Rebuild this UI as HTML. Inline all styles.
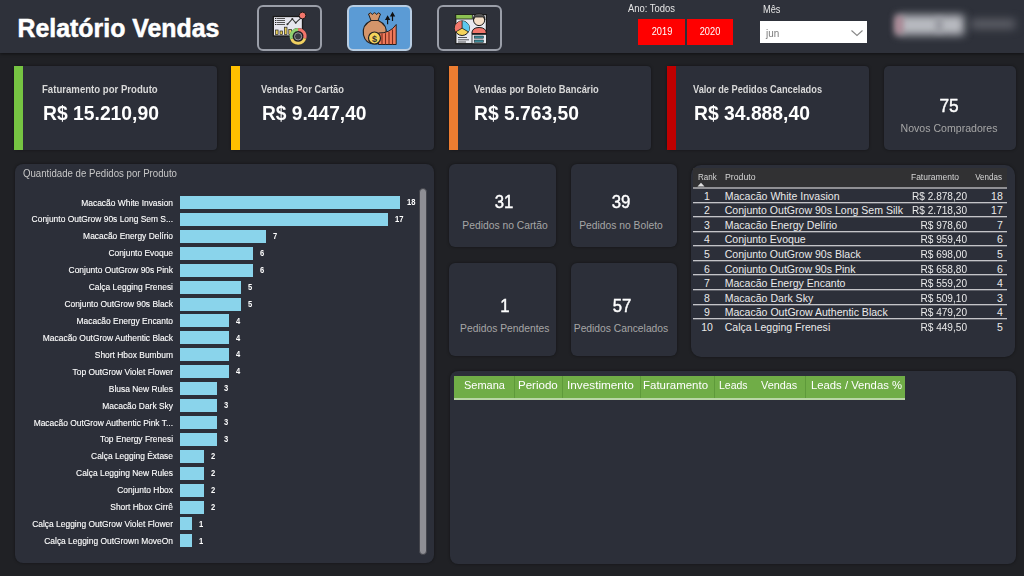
<!DOCTYPE html>
<html><head><meta charset="utf-8"><title>Relatório Vendas</title>
<style>
html,body{margin:0;padding:0;}
body{width:1024px;height:576px;overflow:hidden;position:relative;background:#202125;font-family:"Liberation Sans",sans-serif;}
.r{position:absolute;}
.t{position:absolute;white-space:nowrap;}
</style></head><body>
<div class="r" style="left:0px;top:0px;width:1024px;height:53px;background:#2e313a;box-shadow:0 1px 3px rgba(0,0,0,.5);"></div>
<div class="t" style="top:16.42px;font-size:24.9px;line-height:24.9px;color:#ffffff;font-weight:bold;left:17.5px;-webkit-text-stroke:0.5px #fff;">Relatório Vendas</div>
<div class="r" style="left:257px;top:5px;width:65px;height:46px;background:transparent;border:2px solid #9a9ea8;border-radius:6px;box-sizing:border-box;"></div>
<div class="r" style="left:347px;top:5px;width:65px;height:46px;background:#5b9bd5;border:2px solid #b8cde2;border-radius:6px;box-sizing:border-box;"></div>
<div class="r" style="left:437px;top:5px;width:65px;height:46px;background:transparent;border:2px solid #9a9ea8;border-radius:6px;box-sizing:border-box;"></div>
<svg style="position:absolute;left:257px;top:5px" width="65" height="46" viewBox="0 0 65 46">
<rect x="16.3" y="11.5" width="29.2" height="19.5" fill="#e6e6ee" stroke="#1a1a1a" stroke-width="1.3"/>
<g stroke="#555" stroke-width="1"><line x1="19.5" y1="13.5" x2="28" y2="13.5"/><line x1="19.5" y1="15.5" x2="28" y2="15.5"/><line x1="19.5" y1="17.5" x2="28" y2="17.5"/><line x1="19.5" y1="19.5" x2="28" y2="19.5"/></g>
<g fill="#222"><rect x="18" y="13" width="1" height="1"/><rect x="18" y="15" width="1" height="1"/><rect x="18" y="17" width="1" height="1"/><rect x="18" y="19" width="1" height="1"/></g>
<polyline points="30.4,19.3 35.3,14 38.7,17.8 43.5,13.5 45.5,10.5" fill="none" stroke="#333" stroke-width="1.1"/>
<g fill="#333"><circle cx="30.4" cy="19.3" r="1"/><circle cx="35.3" cy="14" r="1"/><circle cx="38.7" cy="17.8" r="1"/></g>
<circle cx="45.5" cy="10.5" r="3.4" fill="#f2766b" stroke="#1a1a1a" stroke-width="1"/>
<g fill="#e6cc5a" stroke="#222" stroke-width=".7"><rect x="18.5" y="25" width="2.6" height="4.5"/><rect x="23" y="26" width="2.6" height="3.5"/><rect x="27.4" y="22.2" width="2.6" height="7.3"/><rect x="31.8" y="24.5" width="2.6" height="5"/></g>
<circle cx="41.1" cy="31.4" r="8.3" fill="#1e1e24"/>
<path d="M41.1 24.4 A7 7 0 0 1 47.8 33.4" fill="none" stroke="#f2766b" stroke-width="3"/>
<path d="M47.8 33.4 A7 7 0 0 1 34.6 33.8" fill="none" stroke="#f0d060" stroke-width="3"/>
<path d="M34.6 33.8 A7 7 0 0 1 41.1 24.4" fill="none" stroke="#8fd070" stroke-width="3"/>
<circle cx="41.1" cy="31.4" r="3.6" fill="#3a3c44" stroke="#9a9aa0" stroke-width="1"/>
</svg>
<svg style="position:absolute;left:347px;top:5px" width="65" height="46" viewBox="0 0 65 46">
<path d="M21.5 9 Q23.5 6.5 25.5 9.5 Q27.5 6 29.5 9.5 Q31.5 6.5 33.5 9 L31 15.5 L24 15.5 Z" fill="#d4956a" stroke="#222" stroke-width="1"/>
<path d="M24.2 15.5 Q14.5 20 16.5 30 Q18.5 39 27.8 39 Q37 39 39 30 Q41 20 31.3 15.5 Z" fill="#d4956a" stroke="#222" stroke-width="1.2"/>
<path d="M31.5 39.5 L31.5 28 Q43 28.5 49.2 19.5 L49.2 39.5 Z" fill="#f07a5a" stroke="#222" stroke-width="1"/>
<g stroke="#7a2a1a" stroke-width="1.1"><line x1="35" y1="28.4" x2="35" y2="39.5"/><line x1="38.5" y1="28.2" x2="38.5" y2="39.5"/><line x1="42" y1="27" x2="42" y2="39.5"/><line x1="45.5" y1="24.5" x2="45.5" y2="39.5"/></g>
<circle cx="27.5" cy="33" r="6" fill="#f5d45a" stroke="#222" stroke-width="1.2"/>
<text x="27.5" y="36.5" font-size="9" font-family="Liberation Sans" font-weight="bold" text-anchor="middle" fill="#333">$</text>
<g stroke="#111" stroke-width="1.2" fill="#111"><line x1="40.6" y1="19.3" x2="40.6" y2="13.5"/><path d="M38.9 14.5 L40.6 11.5 L42.3 14.5Z"/><line x1="45.5" y1="16" x2="45.5" y2="10"/><path d="M43.8 11 L45.5 8 L47.2 11Z"/></g>
</svg>
<svg style="position:absolute;left:437px;top:5px" width="65" height="46" viewBox="0 0 65 46">
<rect x="18.8" y="9.6" width="30.6" height="29.1" fill="#e8eaf0" stroke="#1a1a1a" stroke-width="1.2"/>
<rect x="18.8" y="9.6" width="16.5" height="4.4" fill="#8cc152" stroke="#1a1a1a" stroke-width=".8"/>
<circle cx="25.1" cy="23.2" r="7.3" fill="#f5d45a" stroke="#1a1a1a" stroke-width="1"/>
<path d="M25.1 23.2 L25.1 15.9 A7.3 7.3 0 0 1 31.4 26.85 Z" fill="#5bc8f0"/>
<path d="M25.1 23.2 L18.8 26.85 A7.3 7.3 0 0 1 25.1 15.9 Z" fill="#f2766b"/>
<g stroke="#1a1a1a" stroke-width=".8"><line x1="25.1" y1="23.2" x2="25.1" y2="15.9"/><line x1="25.1" y1="23.2" x2="31.4" y2="26.85"/><line x1="25.1" y1="23.2" x2="18.8" y2="26.85"/></g>
<rect x="35" y="29.5" width="14.4" height="9.2" fill="#e8eaf0" stroke="#1a1a1a" stroke-width=".8"/>
<path d="M34.8 28.5 Q35 22.5 42.1 22.5 Q49.2 22.5 49.4 28.5 Z" fill="#f2766b" stroke="#1a1a1a" stroke-width="1"/>
<circle cx="42.1" cy="15" r="5.6" fill="#f5e0c8" stroke="#1a1a1a" stroke-width="1"/>
<path d="M36.3 15 Q36 8.5 42.1 8.5 Q48.2 8.5 47.9 15 L46.5 12 L38 12 Z" fill="#555" stroke="#1a1a1a" stroke-width=".8"/>
<rect x="37.2" y="31" width="9.3" height="2.2" fill="#3a8a9a" stroke="#1a1a1a" stroke-width=".5"/>
<rect x="37.2" y="35" width="9.3" height="2.3" fill="#3a8a9a" stroke="#1a1a1a" stroke-width=".5"/>
<g stroke="#444" stroke-width=".9"><line x1="21" y1="32.5" x2="30" y2="32.5"/><line x1="21" y1="34.8" x2="32" y2="34.8"/><line x1="21" y1="37" x2="29" y2="37"/></g>
</svg>
<div class="t" style="top:4.20px;font-size:10.4px;line-height:10.4px;color:#e6e6e6;left:628px;transform:scaleX(0.906);transform-origin:left;">Ano: Todos</div>
<div class="r" style="left:638px;top:18.5px;width:47px;height:26.0px;background:#ff0000;"></div>
<div class="r" style="left:686.5px;top:18.5px;width:46.5px;height:26.0px;background:#ff0000;"></div>
<div class="t" style="top:26.90px;font-size:10.4px;line-height:10.4px;color:#ffffff;left:411.5px;width:500px;text-align:center;transform:scaleX(0.890);transform-origin:center;">2019</div>
<div class="t" style="top:26.90px;font-size:10.4px;line-height:10.4px;color:#ffffff;left:460px;width:500px;text-align:center;transform:scaleX(0.890);transform-origin:center;">2020</div>
<div class="t" style="top:4.67px;font-size:10.2px;line-height:10.2px;color:#e6e6e6;left:763px;transform:scaleX(0.907);transform-origin:left;">Mês</div>
<div class="r" style="left:760px;top:21px;width:107px;height:22px;background:#ffffff;"></div>
<div class="t" style="top:29.20px;font-size:10.4px;line-height:10.4px;color:#7a7a7a;left:765.5px;transform:scaleX(0.950);transform-origin:left;">jun</div>
<svg style="position:absolute;left:850px;top:28px" width="14" height="10" viewBox="0 0 14 10"><polyline points="1.5,2.5 7,7.5 12.5,2.5" fill="none" stroke="#888" stroke-width="1.1"/></svg>
<div class="r" style="left:897px;top:15px;width:67px;height:20px;background:#b8bac0;filter:blur(4px)"></div>
<div class="r" style="left:895px;top:16px;width:8px;height:18px;background:#b08a98;filter:blur(3px)"></div>
<div class="r" style="left:936px;top:18px;width:6px;height:14px;background:#90929a;filter:blur(3px)"></div>
<div class="r" style="left:971px;top:19px;width:44px;height:10px;background:#5c5e66;filter:blur(4px)"></div>
<div class="r" style="left:14px;top:66px;width:203px;height:84px;background:#2c2f39;border-radius:4px;box-shadow:0 0 3px rgba(0,0,0,.45);"></div>
<div class="r" style="left:14px;top:66px;width:9px;height:84px;background:#76c442;"></div>
<div class="t" style="top:84.94px;font-size:10.0px;line-height:10.0px;color:#d9d9d9;font-weight:bold;left:42px;transform:scaleX(0.960);transform-origin:left;">Faturamento por Produto</div>
<div class="t" style="top:103.02px;font-size:20.3px;line-height:20.3px;color:#ffffff;font-weight:bold;left:42.5px;transform:scaleX(0.952);transform-origin:left;">R$ 15.210,90</div>
<div class="r" style="left:231px;top:66px;width:203px;height:84px;background:#2c2f39;border-radius:4px;box-shadow:0 0 3px rgba(0,0,0,.45);"></div>
<div class="r" style="left:231px;top:66px;width:9px;height:84px;background:#ffc000;"></div>
<div class="t" style="top:84.94px;font-size:10.0px;line-height:10.0px;color:#d9d9d9;font-weight:bold;left:261px;transform:scaleX(0.933);transform-origin:left;">Vendas Por Cartão</div>
<div class="t" style="top:103.02px;font-size:20.3px;line-height:20.3px;color:#ffffff;font-weight:bold;left:261.5px;transform:scaleX(0.946);transform-origin:left;">R$ 9.447,40</div>
<div class="r" style="left:449px;top:66px;width:202px;height:84px;background:#2c2f39;border-radius:4px;box-shadow:0 0 3px rgba(0,0,0,.45);"></div>
<div class="r" style="left:449px;top:66px;width:9px;height:84px;background:#ed7d31;"></div>
<div class="t" style="top:84.94px;font-size:10.0px;line-height:10.0px;color:#d9d9d9;font-weight:bold;left:473.7px;transform:scaleX(0.936);transform-origin:left;">Vendas por Boleto Bancário</div>
<div class="t" style="top:103.02px;font-size:20.3px;line-height:20.3px;color:#ffffff;font-weight:bold;left:474.2px;transform:scaleX(0.949);transform-origin:left;">R$ 5.763,50</div>
<div class="r" style="left:667px;top:66px;width:202px;height:84px;background:#2c2f39;border-radius:4px;box-shadow:0 0 3px rgba(0,0,0,.45);"></div>
<div class="r" style="left:667px;top:66px;width:9px;height:84px;background:#c00000;"></div>
<div class="t" style="top:84.94px;font-size:10.0px;line-height:10.0px;color:#d9d9d9;font-weight:bold;left:693px;transform:scaleX(0.925);transform-origin:left;">Valor de Pedidos Cancelados</div>
<div class="t" style="top:103.02px;font-size:20.3px;line-height:20.3px;color:#ffffff;font-weight:bold;left:693.5px;transform:scaleX(0.952);transform-origin:left;">R$ 34.888,40</div>
<div class="r" style="left:884px;top:66px;width:132px;height:84px;background:#2c2f39;border-radius:5px;box-shadow:0 0 3px rgba(0,0,0,.45);"></div>
<div class="t" style="top:96.59px;font-size:18.8px;line-height:18.8px;color:#ffffff;left:698.5px;width:500px;text-align:center;transform:scaleX(0.920);transform-origin:center;-webkit-text-stroke:0.45px #fff;">75</div>
<div class="t" style="top:122.77px;font-size:10.9px;line-height:10.9px;color:#a6a6a6;left:698.5px;width:500px;text-align:center;transform:scaleX(0.971);transform-origin:center;">Novos Compradores</div>
<div class="r" style="left:15px;top:164px;width:419px;height:399px;background:#2c2f39;border-radius:8px;box-shadow:0 0 3px rgba(0,0,0,.45);"></div>
<div class="t" style="top:167.61px;font-size:10.5px;line-height:10.5px;color:#c8c8c8;left:22.9px;transform:scaleX(0.919);transform-origin:left;">Quantidade de Pedidos por Produto</div>
<div class="r" style="left:180px;top:196.0px;width:220.14px;height:13.0px;background:#8ad4eb;"></div>
<div class="t" style="top:198.57px;font-size:8.9px;line-height:8.9px;color:#ffffff;left:-326.8px;width:500px;text-align:right;transform:scaleX(0.949);transform-origin:right;-webkit-text-stroke:0.12px #fff;">Macacão White Invasion</div>
<div class="t" style="top:198.15px;font-size:8.8px;line-height:8.8px;color:#ffffff;font-weight:bold;left:407.14px;transform:scaleX(0.860);transform-origin:left;">18</div>
<div class="r" style="left:180px;top:212.92px;width:207.91000000000003px;height:13.0px;background:#8ad4eb;"></div>
<div class="t" style="top:215.49px;font-size:8.9px;line-height:8.9px;color:#ffffff;left:-326.8px;width:500px;text-align:right;transform:scaleX(0.949);transform-origin:right;-webkit-text-stroke:0.12px #fff;">Conjunto OutGrow 90s Long Sem S...</div>
<div class="t" style="top:215.07px;font-size:8.8px;line-height:8.8px;color:#ffffff;font-weight:bold;left:394.90999999999997px;transform:scaleX(0.860);transform-origin:left;">17</div>
<div class="r" style="left:180px;top:229.84px;width:85.61000000000001px;height:13.0px;background:#8ad4eb;"></div>
<div class="t" style="top:232.41px;font-size:8.9px;line-height:8.9px;color:#ffffff;left:-326.8px;width:500px;text-align:right;transform:scaleX(0.949);transform-origin:right;-webkit-text-stroke:0.12px #fff;">Macacão Energy Delírio</div>
<div class="t" style="top:231.99px;font-size:8.8px;line-height:8.8px;color:#ffffff;font-weight:bold;left:272.61px;transform:scaleX(0.860);transform-origin:left;">7</div>
<div class="r" style="left:180px;top:246.76px;width:73.38px;height:13.0px;background:#8ad4eb;"></div>
<div class="t" style="top:249.33px;font-size:8.9px;line-height:8.9px;color:#ffffff;left:-326.8px;width:500px;text-align:right;transform:scaleX(0.949);transform-origin:right;-webkit-text-stroke:0.12px #fff;">Conjunto Evoque</div>
<div class="t" style="top:248.91px;font-size:8.8px;line-height:8.8px;color:#ffffff;font-weight:bold;left:260.38px;transform:scaleX(0.860);transform-origin:left;">6</div>
<div class="r" style="left:180px;top:263.68px;width:73.38px;height:13.0px;background:#8ad4eb;"></div>
<div class="t" style="top:266.25px;font-size:8.9px;line-height:8.9px;color:#ffffff;left:-326.8px;width:500px;text-align:right;transform:scaleX(0.949);transform-origin:right;-webkit-text-stroke:0.12px #fff;">Conjunto OutGrow 90s Pink</div>
<div class="t" style="top:265.83px;font-size:8.8px;line-height:8.8px;color:#ffffff;font-weight:bold;left:260.38px;transform:scaleX(0.860);transform-origin:left;">6</div>
<div class="r" style="left:180px;top:280.6px;width:61.150000000000006px;height:13.0px;background:#8ad4eb;"></div>
<div class="t" style="top:283.17px;font-size:8.9px;line-height:8.9px;color:#ffffff;left:-326.8px;width:500px;text-align:right;transform:scaleX(0.949);transform-origin:right;-webkit-text-stroke:0.12px #fff;">Calça Legging Frenesi</div>
<div class="t" style="top:282.75px;font-size:8.8px;line-height:8.8px;color:#ffffff;font-weight:bold;left:248.15px;transform:scaleX(0.860);transform-origin:left;">5</div>
<div class="r" style="left:180px;top:297.52px;width:61.150000000000006px;height:13.0px;background:#8ad4eb;"></div>
<div class="t" style="top:300.09px;font-size:8.9px;line-height:8.9px;color:#ffffff;left:-326.8px;width:500px;text-align:right;transform:scaleX(0.949);transform-origin:right;-webkit-text-stroke:0.12px #fff;">Conjunto OutGrow 90s Black</div>
<div class="t" style="top:299.67px;font-size:8.8px;line-height:8.8px;color:#ffffff;font-weight:bold;left:248.15px;transform:scaleX(0.860);transform-origin:left;">5</div>
<div class="r" style="left:180px;top:314.44px;width:48.91999999999999px;height:13.0px;background:#8ad4eb;"></div>
<div class="t" style="top:317.01px;font-size:8.9px;line-height:8.9px;color:#ffffff;left:-326.8px;width:500px;text-align:right;transform:scaleX(0.949);transform-origin:right;-webkit-text-stroke:0.12px #fff;">Macacão Energy Encanto</div>
<div class="t" style="top:316.59px;font-size:8.8px;line-height:8.8px;color:#ffffff;font-weight:bold;left:235.92000000000002px;transform:scaleX(0.860);transform-origin:left;">4</div>
<div class="r" style="left:180px;top:331.36px;width:48.91999999999999px;height:13.0px;background:#8ad4eb;"></div>
<div class="t" style="top:333.93px;font-size:8.9px;line-height:8.9px;color:#ffffff;left:-326.8px;width:500px;text-align:right;transform:scaleX(0.949);transform-origin:right;-webkit-text-stroke:0.12px #fff;">Macacão OutGrow Authentic Black</div>
<div class="t" style="top:333.51px;font-size:8.8px;line-height:8.8px;color:#ffffff;font-weight:bold;left:235.92000000000002px;transform:scaleX(0.860);transform-origin:left;">4</div>
<div class="r" style="left:180px;top:348.28px;width:48.91999999999999px;height:13.0px;background:#8ad4eb;"></div>
<div class="t" style="top:350.85px;font-size:8.9px;line-height:8.9px;color:#ffffff;left:-326.8px;width:500px;text-align:right;transform:scaleX(0.949);transform-origin:right;-webkit-text-stroke:0.12px #fff;">Short Hbox Bumbum</div>
<div class="t" style="top:350.43px;font-size:8.8px;line-height:8.8px;color:#ffffff;font-weight:bold;left:235.92000000000002px;transform:scaleX(0.860);transform-origin:left;">4</div>
<div class="r" style="left:180px;top:365.2px;width:48.91999999999999px;height:13.0px;background:#8ad4eb;"></div>
<div class="t" style="top:367.77px;font-size:8.9px;line-height:8.9px;color:#ffffff;left:-326.8px;width:500px;text-align:right;transform:scaleX(0.949);transform-origin:right;-webkit-text-stroke:0.12px #fff;">Top OutGrow Violet Flower</div>
<div class="t" style="top:367.35px;font-size:8.8px;line-height:8.8px;color:#ffffff;font-weight:bold;left:235.92000000000002px;transform:scaleX(0.860);transform-origin:left;">4</div>
<div class="r" style="left:180px;top:382.12px;width:36.69px;height:13.0px;background:#8ad4eb;"></div>
<div class="t" style="top:384.69px;font-size:8.9px;line-height:8.9px;color:#ffffff;left:-326.8px;width:500px;text-align:right;transform:scaleX(0.949);transform-origin:right;-webkit-text-stroke:0.12px #fff;">Blusa New Rules</div>
<div class="t" style="top:384.27px;font-size:8.8px;line-height:8.8px;color:#ffffff;font-weight:bold;left:223.69px;transform:scaleX(0.860);transform-origin:left;">3</div>
<div class="r" style="left:180px;top:399.04px;width:36.69px;height:13.0px;background:#8ad4eb;"></div>
<div class="t" style="top:401.61px;font-size:8.9px;line-height:8.9px;color:#ffffff;left:-326.8px;width:500px;text-align:right;transform:scaleX(0.949);transform-origin:right;-webkit-text-stroke:0.12px #fff;">Macacão Dark Sky</div>
<div class="t" style="top:401.19px;font-size:8.8px;line-height:8.8px;color:#ffffff;font-weight:bold;left:223.69px;transform:scaleX(0.860);transform-origin:left;">3</div>
<div class="r" style="left:180px;top:415.96px;width:36.69px;height:13.0px;background:#8ad4eb;"></div>
<div class="t" style="top:418.53px;font-size:8.9px;line-height:8.9px;color:#ffffff;left:-326.8px;width:500px;text-align:right;transform:scaleX(0.949);transform-origin:right;-webkit-text-stroke:0.12px #fff;">Macacão OutGrow Authentic Pink T...</div>
<div class="t" style="top:418.11px;font-size:8.8px;line-height:8.8px;color:#ffffff;font-weight:bold;left:223.69px;transform:scaleX(0.860);transform-origin:left;">3</div>
<div class="r" style="left:180px;top:432.88px;width:36.69px;height:13.0px;background:#8ad4eb;"></div>
<div class="t" style="top:435.45px;font-size:8.9px;line-height:8.9px;color:#ffffff;left:-326.8px;width:500px;text-align:right;transform:scaleX(0.949);transform-origin:right;-webkit-text-stroke:0.12px #fff;">Top Energy Frenesi</div>
<div class="t" style="top:435.03px;font-size:8.8px;line-height:8.8px;color:#ffffff;font-weight:bold;left:223.69px;transform:scaleX(0.860);transform-origin:left;">3</div>
<div class="r" style="left:180px;top:449.8px;width:24.460000000000008px;height:13.0px;background:#8ad4eb;"></div>
<div class="t" style="top:452.37px;font-size:8.9px;line-height:8.9px;color:#ffffff;left:-326.8px;width:500px;text-align:right;transform:scaleX(0.949);transform-origin:right;-webkit-text-stroke:0.12px #fff;">Calça Legging Êxtase</div>
<div class="t" style="top:451.95px;font-size:8.8px;line-height:8.8px;color:#ffffff;font-weight:bold;left:211.46px;transform:scaleX(0.860);transform-origin:left;">2</div>
<div class="r" style="left:180px;top:466.72px;width:24.460000000000008px;height:13.0px;background:#8ad4eb;"></div>
<div class="t" style="top:469.29px;font-size:8.9px;line-height:8.9px;color:#ffffff;left:-326.8px;width:500px;text-align:right;transform:scaleX(0.949);transform-origin:right;-webkit-text-stroke:0.12px #fff;">Calça Legging New Rules</div>
<div class="t" style="top:468.87px;font-size:8.8px;line-height:8.8px;color:#ffffff;font-weight:bold;left:211.46px;transform:scaleX(0.860);transform-origin:left;">2</div>
<div class="r" style="left:180px;top:483.64px;width:24.460000000000008px;height:13.0px;background:#8ad4eb;"></div>
<div class="t" style="top:486.21px;font-size:8.9px;line-height:8.9px;color:#ffffff;left:-326.8px;width:500px;text-align:right;transform:scaleX(0.949);transform-origin:right;-webkit-text-stroke:0.12px #fff;">Conjunto Hbox</div>
<div class="t" style="top:485.79px;font-size:8.8px;line-height:8.8px;color:#ffffff;font-weight:bold;left:211.46px;transform:scaleX(0.860);transform-origin:left;">2</div>
<div class="r" style="left:180px;top:500.56px;width:24.460000000000008px;height:12.999999999999943px;background:#8ad4eb;"></div>
<div class="t" style="top:503.13px;font-size:8.9px;line-height:8.9px;color:#ffffff;left:-326.8px;width:500px;text-align:right;transform:scaleX(0.949);transform-origin:right;-webkit-text-stroke:0.12px #fff;">Short Hbox Cirrê</div>
<div class="t" style="top:502.71px;font-size:8.8px;line-height:8.8px;color:#ffffff;font-weight:bold;left:211.46px;transform:scaleX(0.860);transform-origin:left;">2</div>
<div class="r" style="left:180px;top:517.48px;width:12.22999999999999px;height:13.0px;background:#8ad4eb;"></div>
<div class="t" style="top:520.05px;font-size:8.9px;line-height:8.9px;color:#ffffff;left:-326.8px;width:500px;text-align:right;transform:scaleX(0.949);transform-origin:right;-webkit-text-stroke:0.12px #fff;">Calça Legging OutGrow Violet Flower</div>
<div class="t" style="top:519.63px;font-size:8.8px;line-height:8.8px;color:#ffffff;font-weight:bold;left:199.23px;transform:scaleX(0.860);transform-origin:left;">1</div>
<div class="r" style="left:180px;top:534.4px;width:12.22999999999999px;height:13.0px;background:#8ad4eb;"></div>
<div class="t" style="top:536.97px;font-size:8.9px;line-height:8.9px;color:#ffffff;left:-326.8px;width:500px;text-align:right;transform:scaleX(0.949);transform-origin:right;-webkit-text-stroke:0.12px #fff;">Calça Legging OutGrown MoveOn</div>
<div class="t" style="top:536.55px;font-size:8.8px;line-height:8.8px;color:#ffffff;font-weight:bold;left:199.23px;transform:scaleX(0.860);transform-origin:left;">1</div>
<div class="r" style="left:419px;top:188px;width:8px;height:367px;background:#8e8e94;border-radius:4px;border:1px solid #44454c;box-sizing:border-box;"></div>
<div class="r" style="left:449px;top:164px;width:107px;height:83px;background:#2c2f39;border-radius:6px;box-shadow:0 0 3px rgba(0,0,0,.45);"></div>
<div class="t" style="top:193.16px;font-size:18.6px;line-height:18.6px;color:#ffffff;left:253.89999999999998px;width:500px;text-align:center;transform:scaleX(0.900);transform-origin:center;-webkit-text-stroke:0.45px #fff;">31</div>
<div class="t" style="top:220.73px;font-size:10.3px;line-height:10.3px;color:#a6a6a6;left:255px;width:500px;text-align:center;">Pedidos no Cartão</div>
<div class="r" style="left:571px;top:164px;width:106px;height:83px;background:#2c2f39;border-radius:6px;box-shadow:0 0 3px rgba(0,0,0,.45);"></div>
<div class="t" style="top:193.16px;font-size:18.6px;line-height:18.6px;color:#ffffff;left:371.29999999999995px;width:500px;text-align:center;transform:scaleX(0.900);transform-origin:center;-webkit-text-stroke:0.45px #fff;">39</div>
<div class="t" style="top:220.73px;font-size:10.3px;line-height:10.3px;color:#a6a6a6;left:371px;width:500px;text-align:center;">Pedidos no Boleto</div>
<div class="r" style="left:449px;top:263px;width:107px;height:93px;background:#2c2f39;border-radius:6px;box-shadow:0 0 3px rgba(0,0,0,.45);"></div>
<div class="t" style="top:296.76px;font-size:18.6px;line-height:18.6px;color:#ffffff;left:254.5px;width:500px;text-align:center;transform:scaleX(0.900);transform-origin:center;-webkit-text-stroke:0.45px #fff;">1</div>
<div class="t" style="top:323.88px;font-size:10.3px;line-height:10.3px;color:#a6a6a6;left:254.75px;width:500px;text-align:center;">Pedidos Pendentes</div>
<div class="r" style="left:571px;top:263px;width:106px;height:93px;background:#2c2f39;border-radius:6px;box-shadow:0 0 3px rgba(0,0,0,.45);"></div>
<div class="t" style="top:296.76px;font-size:18.6px;line-height:18.6px;color:#ffffff;left:371.6px;width:500px;text-align:center;transform:scaleX(0.900);transform-origin:center;-webkit-text-stroke:0.45px #fff;">57</div>
<div class="t" style="top:323.88px;font-size:10.3px;line-height:10.3px;color:#a6a6a6;left:371px;width:500px;text-align:center;">Pedidos Cancelados</div>
<div class="r" style="left:691px;top:165px;width:324px;height:192px;background:#2c2f39;border-radius:10px;box-shadow:0 0 3px rgba(0,0,0,.45);"></div>
<div class="r" style="left:693px;top:168px;width:314px;height:19px;background:#313133;"></div>
<div class="t" style="top:172.98px;font-size:9px;line-height:9px;color:#d6d6d6;left:697.7px;transform:scaleX(0.890);transform-origin:left;">Rank</div>
<svg style="position:absolute;left:697px;top:182px" width="8" height="5"><path d="M0.5 4.5 L4 0.8 L7.5 4.5Z" fill="#e0e0e0"/></svg>
<div class="t" style="top:172.98px;font-size:9px;line-height:9px;color:#d6d6d6;left:724.7px;transform:scaleX(0.968);transform-origin:left;">Produto</div>
<div class="t" style="top:172.98px;font-size:9px;line-height:9px;color:#d6d6d6;left:459.4px;width:500px;text-align:right;transform:scaleX(0.941);transform-origin:right;">Faturamento</div>
<div class="t" style="top:172.98px;font-size:9px;line-height:9px;color:#d6d6d6;left:502px;width:500px;text-align:right;transform:scaleX(0.892);transform-origin:right;">Vendas</div>
<div class="r" style="left:693px;top:187px;width:314px;height:2px;background:#909094;"></div>
<div class="t" style="top:190.71px;font-size:10.5px;line-height:10.5px;color:#eaeaea;left:457px;width:500px;text-align:center;">1</div>
<div class="t" style="top:190.66px;font-size:10.56px;line-height:10.56px;color:#eaeaea;left:724.7px;">Macacão White Invasion</div>
<div class="t" style="top:190.71px;font-size:10.5px;line-height:10.5px;color:#eaeaea;left:467px;width:500px;text-align:right;transform:scaleX(0.960);transform-origin:right;">R$ 2.878,20</div>
<div class="t" style="top:190.71px;font-size:10.5px;line-height:10.5px;color:#eaeaea;left:502.79999999999995px;width:500px;text-align:right;">18</div>
<div class="r" style="left:693px;top:202px;width:314px;height:1px;background:#c4c4c8;"></div>
<div class="r" style="left:693px;top:203px;width:314px;height:1px;background:#5e6068;"></div>
<div class="t" style="top:205.29px;font-size:10.5px;line-height:10.5px;color:#eaeaea;left:457px;width:500px;text-align:center;">2</div>
<div class="t" style="top:205.24px;font-size:10.56px;line-height:10.56px;color:#eaeaea;left:724.7px;">Conjunto OutGrow 90s Long Sem Silk</div>
<div class="t" style="top:205.29px;font-size:10.5px;line-height:10.5px;color:#eaeaea;left:467px;width:500px;text-align:right;transform:scaleX(0.960);transform-origin:right;">R$ 2.718,30</div>
<div class="t" style="top:205.29px;font-size:10.5px;line-height:10.5px;color:#eaeaea;left:502.79999999999995px;width:500px;text-align:right;">17</div>
<div class="r" style="left:693px;top:216px;width:314px;height:1px;background:#c4c4c8;"></div>
<div class="r" style="left:693px;top:217px;width:314px;height:1px;background:#5e6068;"></div>
<div class="t" style="top:219.87px;font-size:10.5px;line-height:10.5px;color:#eaeaea;left:457px;width:500px;text-align:center;">3</div>
<div class="t" style="top:219.82px;font-size:10.56px;line-height:10.56px;color:#eaeaea;left:724.7px;">Macacão Energy Delírio</div>
<div class="t" style="top:219.87px;font-size:10.5px;line-height:10.5px;color:#eaeaea;left:467px;width:500px;text-align:right;transform:scaleX(0.960);transform-origin:right;">R$ 978,60</div>
<div class="t" style="top:219.87px;font-size:10.5px;line-height:10.5px;color:#eaeaea;left:502.79999999999995px;width:500px;text-align:right;">7</div>
<div class="r" style="left:693px;top:231px;width:314px;height:1px;background:#c4c4c8;"></div>
<div class="r" style="left:693px;top:232px;width:314px;height:1px;background:#5e6068;"></div>
<div class="t" style="top:234.45px;font-size:10.5px;line-height:10.5px;color:#eaeaea;left:457px;width:500px;text-align:center;">4</div>
<div class="t" style="top:234.40px;font-size:10.56px;line-height:10.56px;color:#eaeaea;left:724.7px;">Conjunto Evoque</div>
<div class="t" style="top:234.45px;font-size:10.5px;line-height:10.5px;color:#eaeaea;left:467px;width:500px;text-align:right;transform:scaleX(0.960);transform-origin:right;">R$ 959,40</div>
<div class="t" style="top:234.45px;font-size:10.5px;line-height:10.5px;color:#eaeaea;left:502.79999999999995px;width:500px;text-align:right;">6</div>
<div class="r" style="left:693px;top:245px;width:314px;height:1px;background:#c4c4c8;"></div>
<div class="r" style="left:693px;top:246px;width:314px;height:1px;background:#5e6068;"></div>
<div class="t" style="top:249.03px;font-size:10.5px;line-height:10.5px;color:#eaeaea;left:457px;width:500px;text-align:center;">5</div>
<div class="t" style="top:248.98px;font-size:10.56px;line-height:10.56px;color:#eaeaea;left:724.7px;">Conjunto OutGrow 90s Black</div>
<div class="t" style="top:249.03px;font-size:10.5px;line-height:10.5px;color:#eaeaea;left:467px;width:500px;text-align:right;transform:scaleX(0.960);transform-origin:right;">R$ 698,00</div>
<div class="t" style="top:249.03px;font-size:10.5px;line-height:10.5px;color:#eaeaea;left:502.79999999999995px;width:500px;text-align:right;">5</div>
<div class="r" style="left:693px;top:260px;width:314px;height:1px;background:#c4c4c8;"></div>
<div class="r" style="left:693px;top:261px;width:314px;height:1px;background:#5e6068;"></div>
<div class="t" style="top:263.61px;font-size:10.5px;line-height:10.5px;color:#eaeaea;left:457px;width:500px;text-align:center;">6</div>
<div class="t" style="top:263.56px;font-size:10.56px;line-height:10.56px;color:#eaeaea;left:724.7px;">Conjunto OutGrow 90s Pink</div>
<div class="t" style="top:263.61px;font-size:10.5px;line-height:10.5px;color:#eaeaea;left:467px;width:500px;text-align:right;transform:scaleX(0.960);transform-origin:right;">R$ 658,80</div>
<div class="t" style="top:263.61px;font-size:10.5px;line-height:10.5px;color:#eaeaea;left:502.79999999999995px;width:500px;text-align:right;">6</div>
<div class="r" style="left:693px;top:274px;width:314px;height:1px;background:#c4c4c8;"></div>
<div class="r" style="left:693px;top:275px;width:314px;height:1px;background:#5e6068;"></div>
<div class="t" style="top:278.19px;font-size:10.5px;line-height:10.5px;color:#eaeaea;left:457px;width:500px;text-align:center;">7</div>
<div class="t" style="top:278.14px;font-size:10.56px;line-height:10.56px;color:#eaeaea;left:724.7px;">Macacão Energy Encanto</div>
<div class="t" style="top:278.19px;font-size:10.5px;line-height:10.5px;color:#eaeaea;left:467px;width:500px;text-align:right;transform:scaleX(0.960);transform-origin:right;">R$ 559,20</div>
<div class="t" style="top:278.19px;font-size:10.5px;line-height:10.5px;color:#eaeaea;left:502.79999999999995px;width:500px;text-align:right;">4</div>
<div class="r" style="left:693px;top:289px;width:314px;height:1px;background:#c4c4c8;"></div>
<div class="r" style="left:693px;top:290px;width:314px;height:1px;background:#5e6068;"></div>
<div class="t" style="top:292.77px;font-size:10.5px;line-height:10.5px;color:#eaeaea;left:457px;width:500px;text-align:center;">8</div>
<div class="t" style="top:292.72px;font-size:10.56px;line-height:10.56px;color:#eaeaea;left:724.7px;">Macacão Dark Sky</div>
<div class="t" style="top:292.77px;font-size:10.5px;line-height:10.5px;color:#eaeaea;left:467px;width:500px;text-align:right;transform:scaleX(0.960);transform-origin:right;">R$ 509,10</div>
<div class="t" style="top:292.77px;font-size:10.5px;line-height:10.5px;color:#eaeaea;left:502.79999999999995px;width:500px;text-align:right;">3</div>
<div class="r" style="left:693px;top:304px;width:314px;height:1px;background:#c4c4c8;"></div>
<div class="r" style="left:693px;top:305px;width:314px;height:1px;background:#5e6068;"></div>
<div class="t" style="top:307.35px;font-size:10.5px;line-height:10.5px;color:#eaeaea;left:457px;width:500px;text-align:center;">9</div>
<div class="t" style="top:307.30px;font-size:10.56px;line-height:10.56px;color:#eaeaea;left:724.7px;">Macacão OutGrow Authentic Black</div>
<div class="t" style="top:307.35px;font-size:10.5px;line-height:10.5px;color:#eaeaea;left:467px;width:500px;text-align:right;transform:scaleX(0.960);transform-origin:right;">R$ 479,20</div>
<div class="t" style="top:307.35px;font-size:10.5px;line-height:10.5px;color:#eaeaea;left:502.79999999999995px;width:500px;text-align:right;">4</div>
<div class="r" style="left:693px;top:318px;width:314px;height:1px;background:#c4c4c8;"></div>
<div class="r" style="left:693px;top:319px;width:314px;height:1px;background:#5e6068;"></div>
<div class="t" style="top:321.93px;font-size:10.5px;line-height:10.5px;color:#eaeaea;left:457px;width:500px;text-align:center;">10</div>
<div class="t" style="top:321.88px;font-size:10.56px;line-height:10.56px;color:#eaeaea;left:724.7px;">Calça Legging Frenesi</div>
<div class="t" style="top:321.93px;font-size:10.5px;line-height:10.5px;color:#eaeaea;left:467px;width:500px;text-align:right;transform:scaleX(0.960);transform-origin:right;">R$ 449,50</div>
<div class="t" style="top:321.93px;font-size:10.5px;line-height:10.5px;color:#eaeaea;left:502.79999999999995px;width:500px;text-align:right;">5</div>
<div class="r" style="left:449.5px;top:371px;width:566.5px;height:192.5px;background:#2c2f39;border-radius:8px;box-shadow:0 0 3px rgba(0,0,0,.45);"></div>
<div class="r" style="left:454.4px;top:376px;width:451.1px;height:23px;background:#70ad47;"></div>
<div class="r" style="left:454.4px;top:398px;width:451.1px;height:1.5px;background:#b9d6a6;"></div>
<div class="r" style="left:513.7px;top:376px;width:1.0px;height:22px;background:#5e9a3a;"></div>
<div class="r" style="left:562.2px;top:376px;width:1.0px;height:22px;background:#5e9a3a;"></div>
<div class="r" style="left:639.5px;top:376px;width:1.0px;height:22px;background:#5e9a3a;"></div>
<div class="r" style="left:714px;top:376px;width:1px;height:22px;background:#5e9a3a;"></div>
<div class="r" style="left:805.4px;top:376px;width:1.0px;height:22px;background:#5e9a3a;"></div>
<div class="t" style="top:379.53px;font-size:11.3px;line-height:11.3px;color:#ffffff;left:463.8px;transform:scaleX(0.974);transform-origin:left;">Semana</div>
<div class="t" style="top:379.53px;font-size:11.3px;line-height:11.3px;color:#ffffff;left:518px;transform:scaleX(1.022);transform-origin:left;">Periodo</div>
<div class="t" style="top:379.53px;font-size:11.3px;line-height:11.3px;color:#ffffff;left:566.6px;transform:scaleX(1.042);transform-origin:left;">Investimento</div>
<div class="t" style="top:379.53px;font-size:11.3px;line-height:11.3px;color:#ffffff;left:643px;transform:scaleX(1.015);transform-origin:left;">Faturamento</div>
<div class="t" style="top:379.53px;font-size:11.3px;line-height:11.3px;color:#ffffff;left:718.5px;transform:scaleX(0.929);transform-origin:left;">Leads</div>
<div class="t" style="top:379.53px;font-size:11.3px;line-height:11.3px;color:#ffffff;left:760.8px;transform:scaleX(0.963);transform-origin:left;">Vendas</div>
<div class="t" style="top:379.53px;font-size:11.3px;line-height:11.3px;color:#ffffff;left:810.6px;transform:scaleX(0.999);transform-origin:left;">Leads / Vendas %</div>
</body></html>
